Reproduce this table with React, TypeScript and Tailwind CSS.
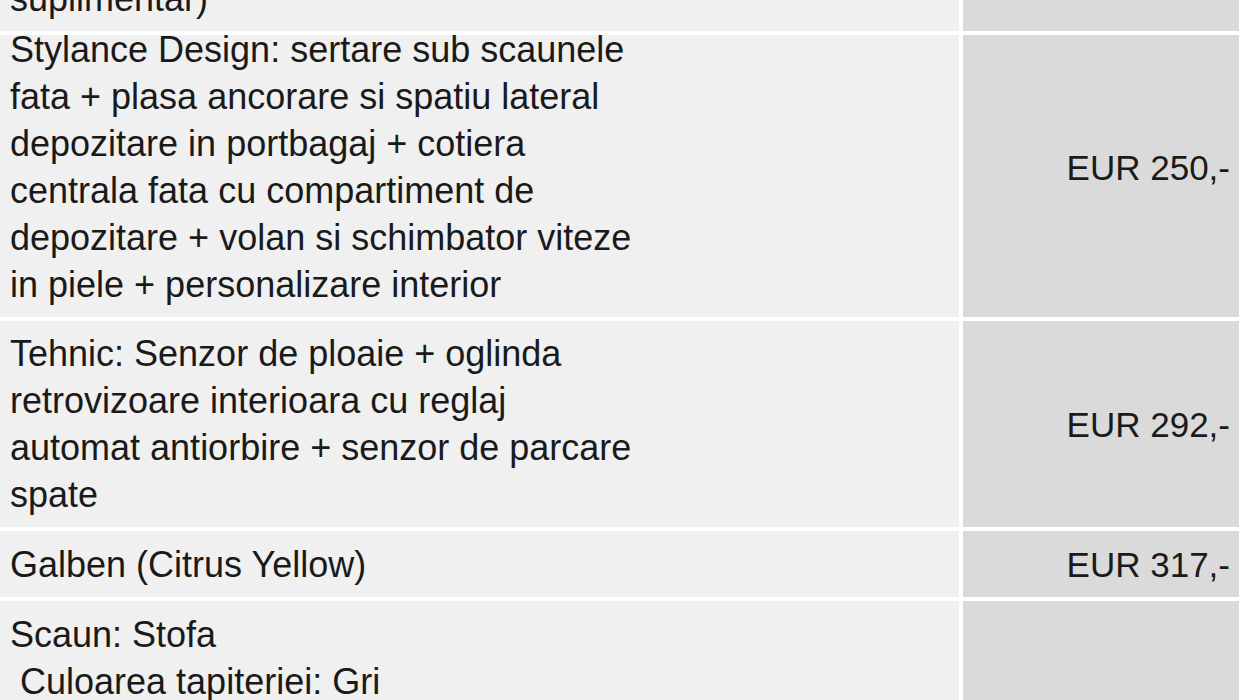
import React from "react";

type Row = { lines: string[]; price: string; cls: string };

const rows: Row[] = [
  { lines: ["Pachet optional (cost", "suplimentar)"], price: "", cls: "h-[113px]" },
  {
    lines: [
      "Stylance Design: sertare sub scaunele",
      "fata + plasa ancorare si spatiu lateral",
      "depozitare in portbagaj + cotiera",
      "centrala fata cu compartiment de",
      "depozitare + volan si schimbator viteze",
      "in piele + personalizare interior",
    ],
    price: "EUR 250,-",
    cls: "h-[282px] pb-[18px]",
  },
  {
    lines: [
      "Tehnic: Senzor de ploaie + oglinda",
      "retrovizoare interioara cu reglaj",
      "automat antiorbire + senzor de parcare",
      "spate",
    ],
    price: "EUR 292,-",
    cls: "h-[206px]",
  },
  { lines: ["Galben (Citrus Yellow)"], price: "EUR 317,-", cls: "h-[66px]" },
  {
    lines: ["Scaun: Stofa", "\u00a0Culoarea tapiteriei: Gri", "Cotiera: Nu"],
    price: "",
    cls: "h-[160px]",
  },
];

export default function App() {
  return (
    <div className="w-[1239px] h-[700px] overflow-hidden bg-white font-['Liberation_Sans',Arial,sans-serif]">
      <div className="-mt-[82px] grid grid-cols-[959px_276px] gap-[4px] bg-white leading-[47px] text-[#1a1a1a]">
        {rows.map((r, i) => (
          <React.Fragment key={i}>
            <div className={`flex flex-col justify-center bg-[#f0f0f0] pl-[10px] whitespace-pre text-[36px] ${r.cls}`}>
              {r.lines.map((l, j) => (
                <div key={j}>{l}</div>
              ))}
            </div>
            <div className={`flex items-center justify-end bg-[#dadada] pr-[9px] whitespace-pre text-[35px] ${r.cls}`}>
              {r.price}
            </div>
          </React.Fragment>
        ))}
      </div>
    </div>
  );
}
